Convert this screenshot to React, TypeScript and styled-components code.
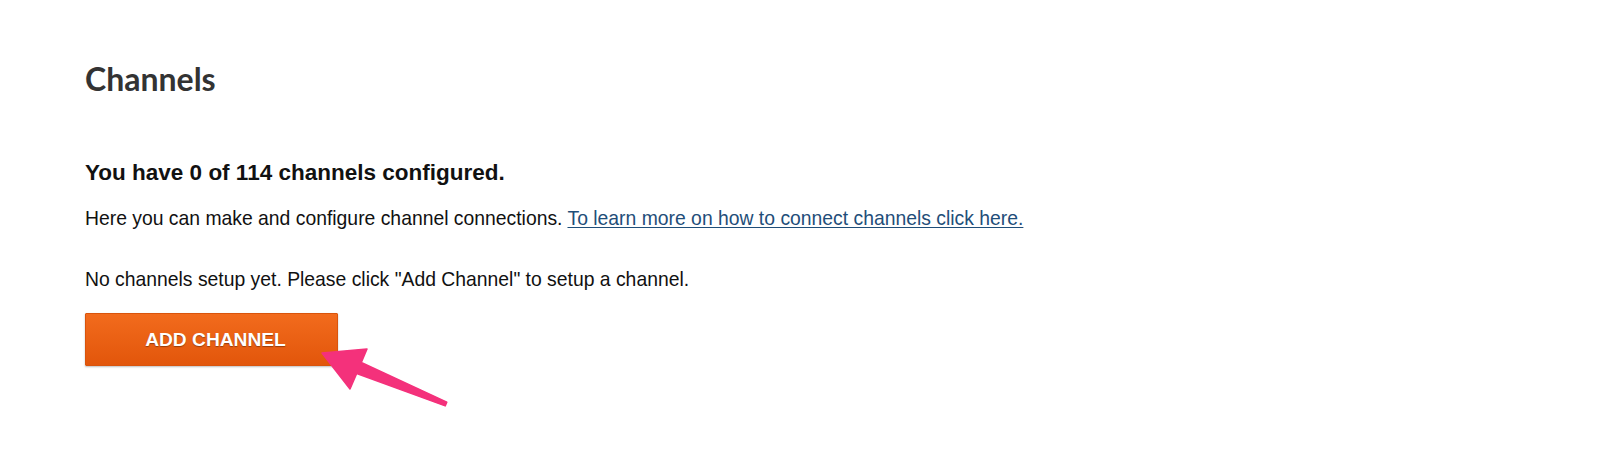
import React from "react";
import styled, { createGlobalStyle } from "styled-components";

const Global = createGlobalStyle`
  html, body { margin: 0; padding: 0; background: #ffffff; }
  body { width: 1600px; height: 466px; overflow: hidden; }
`;

const Page = styled.main`
  position: relative;
  box-sizing: border-box;
  width: 1600px;
  height: 466px;
  padding: 59px 0 0 85px;
  display: flex;
  flex-direction: column;
  align-items: flex-start;
`;

const Title = styled.h1`
  margin: 0;
  font-family: Lato, "Open Sans", sans-serif;
  font-weight: 700;
  font-size: 32px;
  line-height: 40px;
  color: #333333;
`;

const Summary = styled.h2`
  margin: 60px 0 0;
  font-family: "Liberation Sans", Arial, sans-serif;
  font-weight: 700;
  font-size: 22.5px;
  line-height: 28px;
  color: #111111;
`;

const Text = styled.p<{ $gap: number }>`
  margin: ${(p) => p.$gap}px 0 0;
  font-family: "Liberation Sans", Arial, sans-serif;
  font-size: 19.35px;
  line-height: 24px;
  color: #111111;
`;

const Link = styled.a`
  color: #1f4e79;
  text-decoration: underline;
  text-underline-offset: 2px;
`;

const AddButton = styled.button`
  margin-top: 22px;
  box-sizing: border-box;
  width: 253px;
  height: 53px;
  padding: 0 0 0 8px;
  border: 1px solid #d9540c;
  border-radius: 1px;
  background: linear-gradient(#f26b1d, #e2560b);
  box-shadow: 0 1px 2px rgba(0, 0, 0, 0.25);
  color: #ffffff;
  font-family: "Liberation Sans", Arial, sans-serif;
  font-weight: 700;
  font-size: 19.2px;
  text-shadow: 0 1px 1px rgba(0, 0, 0, 0.35);
  cursor: pointer;
`;

const Arrow = styled.svg`
  position: absolute;
  left: 0;
  top: 0;
  pointer-events: none;
`;

export default function App() {
  return (
    <>
      <Global />
      <Page>
        <Title>Channels</Title>
        <Summary>You have 0 of 114 channels configured.</Summary>
        <Text $gap={19}>
          Here you can make and configure channel connections.{" "}
          <Link href="#">To learn more on how to connect channels click here.</Link>
        </Text>
        <Text $gap={37}>No channels setup yet. Please click "Add Channel" to setup a channel.</Text>
        <AddButton>ADD CHANNEL</AddButton>
        <Arrow width="1600" height="466" viewBox="0 0 1600 466">
          <polygon
            points="322,353 367,349 361.3,362.5 446.8,402.1 445.2,405.9 356.7,373.5 350,389"
            fill="#f4317b"
            stroke="#f4317b"
            strokeWidth="1.5"
            strokeLinejoin="round"
          />
        </Arrow>
      </Page>
    </>
  );
}
